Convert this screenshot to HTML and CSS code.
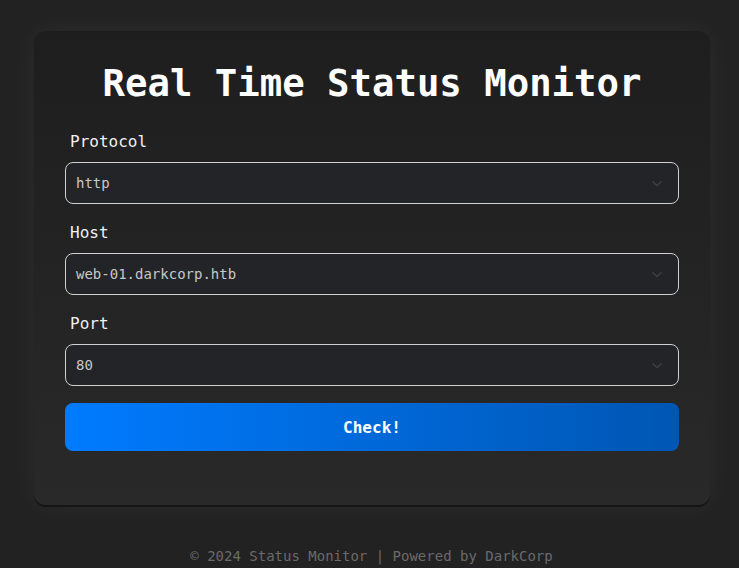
FILE: index.html
```html
<!DOCTYPE html>
<html lang="en">
<head>
<meta charset="utf-8">
<title>Real Time Status Monitor</title>
<link rel="stylesheet" href="styles.css">
</head>
<body>
<main class="card">
  <h1 class="title">Real Time Status Monitor</h1>
  <form class="form">
    <div class="group">
      <label class="label">Protocol</label>
      <div class="select">
        <span class="value">http</span>
        <svg class="chev" width="12" height="8" viewBox="0 0 12 8"><path d="M1.5 1.5 L6 5.5 L10.5 1.5" fill="none" stroke="#3d4045" stroke-width="1.4"/></svg>
      </div>
    </div>
    <div class="group">
      <label class="label">Host</label>
      <div class="select">
        <span class="value">web-01.darkcorp.htb</span>
        <svg class="chev" width="12" height="8" viewBox="0 0 12 8"><path d="M1.5 1.5 L6 5.5 L10.5 1.5" fill="none" stroke="#3d4045" stroke-width="1.4"/></svg>
      </div>
    </div>
    <div class="group">
      <label class="label">Port</label>
      <div class="select">
        <span class="value">80</span>
        <svg class="chev" width="12" height="8" viewBox="0 0 12 8"><path d="M1.5 1.5 L6 5.5 L10.5 1.5" fill="none" stroke="#3d4045" stroke-width="1.4"/></svg>
      </div>
    </div>
    <button type="button" class="btn">Check!</button>
  </form>
</main>
<footer class="footer">© 2024 Status Monitor | Powered by DarkCorp</footer>
</body>
</html>
```
FILE: styles.css
```css
* { box-sizing: border-box; }
html, body { height: 100%; }
body {
  margin: 0;
  background: #222222;
  font-family: "DejaVu Sans Mono", monospace;
  color: #eeeeee;
  overflow: hidden;
}
.card {
  width: 676px;
  margin: 31px 0 0 34px;
  padding: 31px 31px 31px;
  border-radius: 12px;
  background: linear-gradient(180deg, #1e1e1e 0%, #292929 100%);
  box-shadow: 0 2px 1px rgba(0,0,0,0.45), 0 0 28px rgba(255,255,255,0.055);
}
.title {
  margin: 0 0 26px;
  text-align: center;
  font-size: 37.3px;
  font-weight: bold;
  line-height: 43px;
  color: #ffffff;
}
.form { display: flex; flex-direction: column; }
.group { margin-bottom: 18px; }
.label {
  display: block;
  margin: 0 5px 10px;
  font-size: 16px;
  line-height: 21px;
  color: #f0f0f0;
}
.select {
  position: relative;
  height: 42px;
  padding: 0 10px;
  display: flex;
  align-items: center;
  border: 1px solid #d0d0d0;
  border-radius: 8px;
  background: #232427;
}
.value { font-size: 14px; color: #c8c8c8; }
.chev { position: absolute; right: 15px; top: 17px; }
.btn {
  height: 48px;
  margin: -1px 0 23px;
  border: none;
  border-radius: 8px;
  background: linear-gradient(90deg, #007bff 0%, #0056b3 100%);
  color: #ffffff;
  font-family: "DejaVu Sans Mono", monospace;
  font-size: 16px;
  font-weight: bold;
}
.footer {
  margin-top: 43px;
  padding-left: 4px;
  text-align: center;
  font-size: 14px;
  color: #6a6a6a;
}
```
